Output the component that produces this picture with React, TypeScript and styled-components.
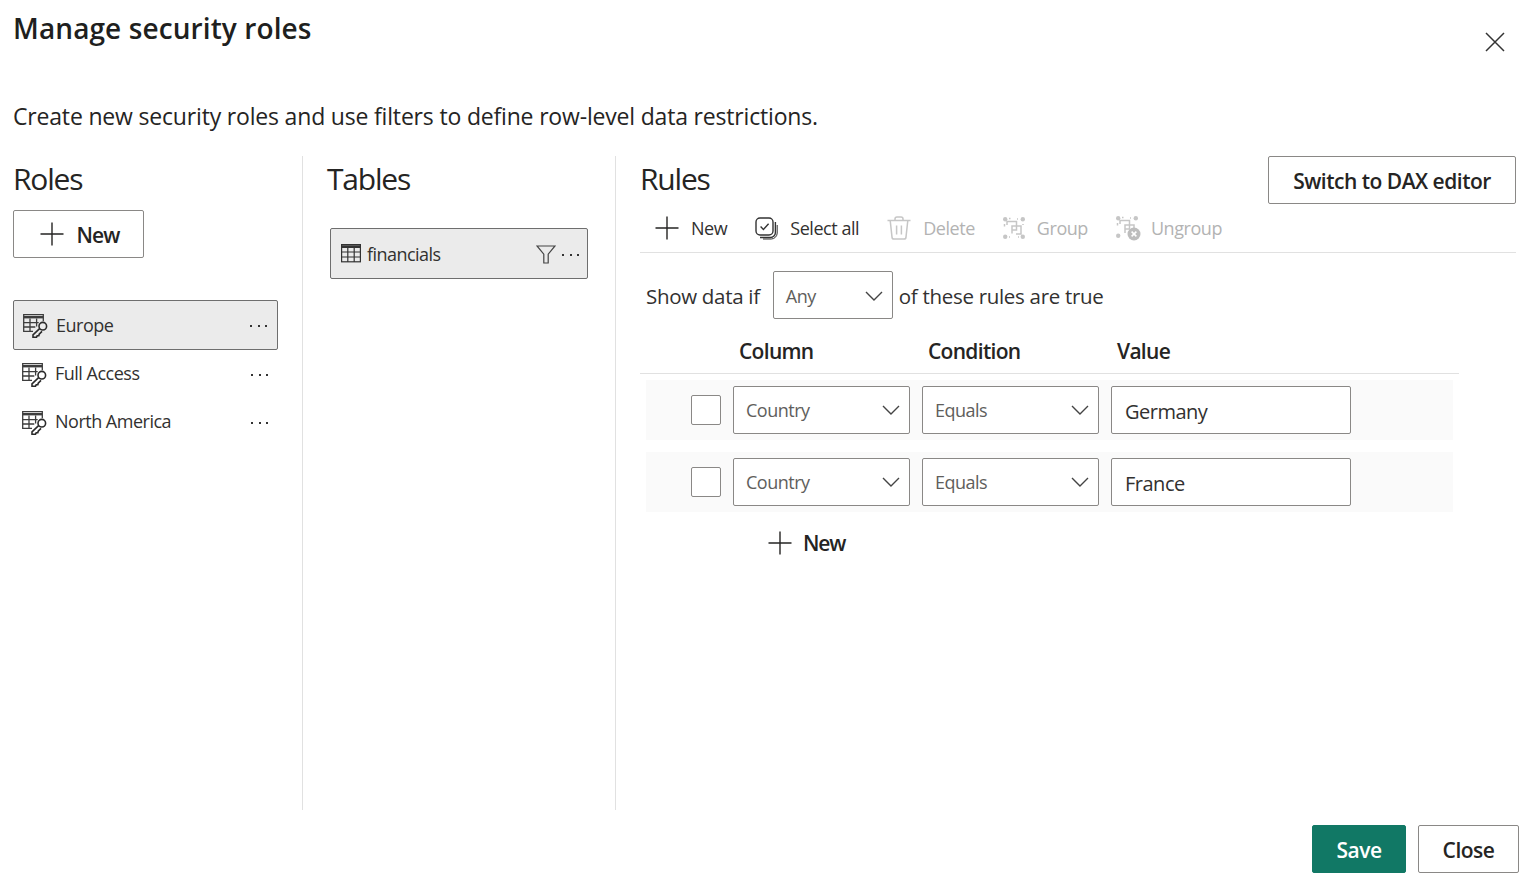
import styled, { createGlobalStyle } from "styled-components";

const GlobalStyle = createGlobalStyle`
    html, body {
        margin: 0;
        padding: 0;
        background: #fff;
    }
    body {
        font-family: "Open Sans", "Noto Sans", "Liberation Sans", sans-serif;
        color: #252423;
    }
    * { box-sizing: border-box; }
`;

const PlusIcon = ({ size = 24 }: { size?: number }) => (
    <svg width={size} height={size} viewBox="0 0 24 24" fill="none" stroke="#252423" strokeWidth="1.4">
        <path d="M12 0.5v23M0.5 12h23" />
    </svg>
);

const Chevron = () => (
    <svg width="18" height="10" viewBox="0 0 18 10" fill="none" stroke="#444" strokeWidth="1.4">
        <path d="M1 1l8 8 8-8" />
    </svg>
);

const RoleSvg = styled.svg`
    margin-top: 2px;
    flex-shrink: 0;
`;

const RoleIcon = () => (
    <RoleSvg width="25" height="24" viewBox="0 0 25 24" fill="none" stroke="#3d3d3d" strokeWidth="1.3">
        <path d="M10 17.4H.7V.7h19.6v6.6" />
        <path d="M.7 3.2h19.6" strokeWidth="2.4" />
        <path d="M.7 8.6h15M.7 13h11.6M7 4.4v13M13.6 4.4v8" />
        <circle cx="19.8" cy="12.2" r="3.8" stroke="#2b2b2b" strokeWidth="1.6" />
        <path d="M16.6 14.6L10 20.8v2.6h3.4l.8-1.6h1.6l.4-1.6 2.8-2.8" stroke="#2b2b2b" strokeWidth="1.6" />
    </RoleSvg>
);

const TableIcon = () => (
    <svg width="20" height="19" viewBox="0 0 20 19" fill="none" stroke="#333" strokeWidth="1.2">
        <rect x="0.6" y="0.6" width="18.8" height="17.2" />
        <path d="M.6 2h18.8M.6 3.2h18.8" strokeWidth="1.4" />
        <path d="M.6 8h18.8M.6 13h18.8M6.8 4v14M13.2 4v14" />
    </svg>
);

const FilterIcon = () => (
    <svg width="20" height="19" viewBox="0 0 20 19" fill="none" stroke="#444" strokeWidth="1.2">
        <path d="M1 1h18l-6.8 8.2V18H7.8V9.2z" />
    </svg>
);

const SelectAllIcon = () => (
    <svg width="23" height="23" viewBox="0 0 23 23" fill="none" stroke="#333" strokeWidth="1.4">
        <rect x="1" y="1" width="17" height="17" rx="4" />
        <path d="M5.6 9.6l2.8 2.8 5.2-5.6" />
        <path d="M20.4 5v10.5a5 5 0 0 1-5 5H5" />
        <path d="M22.2 8v8a6 6 0 0 1-6 6H8" strokeWidth="1" />
    </svg>
);

const TrashIcon = () => (
    <svg width="24" height="24" viewBox="0 0 24 24" fill="none" stroke="#c6c6c6" strokeWidth="1.5">
        <path d="M.5 4.5h23M8 4.5V3a2 2 0 0 1 2-2h4a2 2 0 0 1 2 2v1.5" />
        <path d="M3.2 4.5l1.8 16.6a2 2 0 0 0 2 1.9h10a2 2 0 0 0 2-1.9l1.8-16.6" />
        <path d="M9.6 9.5v9M14.4 9.5v9" />
    </svg>
);

const GroupIcon = () => (
    <svg width="22" height="22" viewBox="0 0 22 22" fill="none" stroke="#c6c6c6" strokeWidth="1.5">
        <g fill="#c6c6c6" stroke="none">
            <circle cx="2.2" cy="2.2" r="2.2" />
            <circle cx="19.8" cy="2.2" r="2.2" />
            <circle cx="2.2" cy="19.8" r="2.2" />
            <circle cx="19.8" cy="19.8" r="2.2" />
        </g>
        <path d="M1.5 7v2.5M6 1.5h1.5M20 7v1M6 20h1M15 20h1M14 2h1" />
        <path d="M4 8V4.5h9.5V13H9" />
        <path d="M9 16.5V9h9v8h-5" />
    </svg>
);

const UngroupSvg = styled.svg`
    margin-right: -2px;
`;

const UngroupIcon = () => (
    <UngroupSvg width="25" height="25" viewBox="0 0 25 25" fill="none" stroke="#c6c6c6" strokeWidth="1.5">
        <g fill="#c6c6c6" stroke="none">
            <circle cx="2.2" cy="2.2" r="2.2" />
            <circle cx="19.8" cy="2.2" r="2.2" />
            <circle cx="2.2" cy="19.8" r="2.2" />
        </g>
        <path d="M1.5 7v2.5M6 1.5h1.5M14 2h1" />
        <path d="M4 8V4.5h9.5V13H9" />
        <path d="M9 17V9h9v3" />
        <circle cx="18" cy="18" r="6.5" fill="#bdbdbd" stroke="none" />
        <path d="M15.6 15.6l4.8 4.8M20.4 15.6l-4.8 4.8" stroke="#fff" strokeWidth="1.5" />
    </UngroupSvg>
);

const CloseIcon = () => (
    <svg width="20" height="20" viewBox="0 0 20 20" fill="none" stroke="#333" strokeWidth="1.5">
        <path d="M1 1l18 18M19 1L1 19" />
    </svg>
);

const Page = styled.div`
    width: 1527px;
    height: 883px;
    overflow: hidden;
    display: flex;
    flex-direction: column;
`;

const Header = styled.header`
    height: 156px;
    padding: 0 13px;
    position: relative;
`;

const Title = styled.h1`
    margin: 0;
    font-size: 28px;
    line-height: 38px;
    padding: 9px 0 0 0;
    font-weight: 600;
    letter-spacing: 0.1px;
    color: #201f1e;
`;

const Subtitle = styled.p`
    margin: 0;
    padding-top: 51px;
    font-size: 23px;
    line-height: 36px;
    letter-spacing: -0.18px;
`;

const CloseButton = styled.div`
    position: absolute;
    top: 32px;
    right: 22px;
    display: flex;
`;

const Columns = styled.main`
    height: 654px;
    display: grid;
    grid-template-columns: 303px 313px 1fr;
`;

const RolesColumn = styled.section`
    border-right: 1px solid #e1e1e1;
    padding: 0 24px 0 13px;
`;

const TablesColumn = styled.section`
    border-right: 1px solid #e1e1e1;
    padding: 0 27px 0 24px;
`;

const RulesColumn = styled.section`
    padding: 0 11px 0 24px;
    min-width: 0;
`;

const ColumnTitle = styled.h2`
    margin: 0;
    font-size: 30px;
    line-height: 46px;
    font-weight: 400;
    letter-spacing: -1.2px;
    color: #252423;
`;

const OutlineButton = styled.button`
    display: flex;
    align-items: center;
    justify-content: center;
    height: 48px;
    background: #fff;
    border: 1px solid #8a8886;
    border-radius: 2px;
    font-family: inherit;
    font-size: 21px;
    font-weight: 600;
    letter-spacing: -0.5px;
    color: #252423;
    padding: 2px 0 0;
`;

const NewRoleButton = styled(OutlineButton)`
    width: 131px;
    margin-top: 8px;
    padding-left: 2px;
    gap: 13px;
    letter-spacing: -0.9px;
    svg { margin-top: -2px; }
`;

const RoleList = styled.div`
    margin-top: 42px;
    display: flex;
    flex-direction: column;
`;

const RoleRow = styled.div<{ $selected?: boolean }>`
    display: flex;
    align-items: center;
    padding: ${({ $selected }) => ($selected ? "0 10px 0 9px" : "0 9px 0 8px")};
    gap: 8px;
    font-size: 18px;
    letter-spacing: -0.5px;
    color: #323130;
    background: ${({ $selected }) => ($selected ? "#ebebeb" : "transparent")};
    border: 1px solid ${({ $selected }) => ($selected ? "#6e6e6e" : "transparent")};
    border-radius: 2px;
    height: ${({ $selected }) => ($selected ? "50px" : "48px")};
`;

const RoleName = styled.span<{ $selected?: boolean }>`
    flex: 1;
    margin-top: ${({ $selected }) => ($selected ? "0" : "-2px")};
`;

const TableName = styled.span`
    flex: 1;
`;

const Dots = styled.span`
    display: flex;
    gap: 5.5px;
    margin-top: 2px;
    i {
        width: 2px;
        height: 2px;
        background: #333;
        display: block;
    }
`;

const MoreDots = () => (
    <Dots>
        <i />
        <i />
        <i />
    </Dots>
);

const TableRow = styled.div`
    margin: 26px 0 0 3px;
    height: 51px;
    width: 258px;
    display: flex;
    align-items: center;
    gap: 6px;
    padding: 0 8px 0 10px;
    background: #ebebeb;
    border: 1px solid #6e6e6e;
    border-radius: 2px;
    font-size: 18px;
    letter-spacing: -0.55px;
    color: #323130;
    svg:nth-of-type(2) { margin-top: 2px; }
`;

const RulesHead = styled.div`
    display: flex;
    justify-content: space-between;
`;

const DaxButton = styled(OutlineButton)`
    width: 248px;
`;

const Toolbar = styled.div`
    height: 49px;
    display: flex;
    align-items: center;
    padding: 0 0 0 15px;
    gap: 28px;
    border-bottom: 1px solid #e1e1e1;
`;

const ToolItem = styled.div<{ $disabled?: boolean }>`
    display: flex;
    align-items: center;
    gap: 12px;
    font-size: 18px;
    letter-spacing: -0.45px;
    color: ${({ $disabled }) => ($disabled ? "#b3b3b3" : "#323130")};
`;

const ShowRow = styled.div`
    margin-top: 18px;
    padding-left: 6px;
    height: 48px;
    display: flex;
    align-items: center;
    font-size: 20.5px;
    letter-spacing: -0.3px;
    color: #323130;
`;

const ShowText = styled.span`
    padding-top: 2px;
`;

const Select = styled.div<{ $width: number }>`
    width: ${({ $width }) => $width}px;
    height: 48px;
    display: flex;
    align-items: center;
    justify-content: space-between;
    padding: 0 9px 0 12px;
    background: #fff;
    border: 1px solid #8a8886;
    border-radius: 2px;
    font-size: 18px;
    letter-spacing: -0.5px;
    color: #605e5c;
`;

const AnySelect = styled(Select)`
    margin: 0 6px 0 13px;
    padding-top: 1px;
`;

const HeaderRow = styled.div`
    width: 819px;
    height: 55px;
    display: grid;
    grid-template-columns: 99px 189px 189px 1fr;
    align-items: center;
    padding-top: 9px;
    border-bottom: 1px solid #e1e1e1;
    font-size: 21px;
    font-weight: 600;
    letter-spacing: -0.7px;
    color: #252423;
    span:first-child { grid-column: 2; }
`;

const RuleRows = styled.div`
    margin: 6px 0 0 6px;
    width: 807px;
    display: flex;
    flex-direction: column;
    gap: 12px;
`;

const RuleRow = styled.div`
    height: 60px;
    display: flex;
    align-items: center;
    gap: 12px;
    padding-left: 45px;
    background: #fafafa;
`;

const Checkbox = styled.div`
    width: 30px;
    height: 30px;
    background: #fff;
    border: 1px solid #8a8886;
    border-radius: 2px;
`;

const ValueInput = styled.div`
    width: 240px;
    height: 48px;
    display: flex;
    align-items: center;
    padding: 2px 13px 0;
    background: #fff;
    border: 1px solid #8a8886;
    border-radius: 2px;
    font-size: 20px;
    letter-spacing: -0.5px;
    color: #323130;
`;

const AddRule = styled.div`
    margin: 13px 0 0 128px;
    display: flex;
    align-items: center;
    gap: 11px;
    height: 36px;
    font-size: 21px;
    font-weight: 600;
    letter-spacing: -1.1px;
`;

const Footer = styled.footer`
    flex: 1;
    display: flex;
    justify-content: flex-end;
    gap: 12px;
    padding: 15px 8px 0 0;
`;

const SaveButton = styled(OutlineButton)`
    width: 94px;
    background: #117865;
    border-color: #117865;
    color: #fff;
`;

const CloseDialogButton = styled(OutlineButton)`
    width: 101px;
`;

const roles = ["Europe", "Full Access", "North America"];
const rules = ["Germany", "France"];

const App = () => {
    return (
        <Page>
            <GlobalStyle />
            <Header>
                <Title>Manage security roles</Title>
                <Subtitle>Create new security roles and use filters to define row-level data restrictions.</Subtitle>
                <CloseButton>
                    <CloseIcon />
                </CloseButton>
            </Header>
            <Columns>
                <RolesColumn>
                    <ColumnTitle>Roles</ColumnTitle>
                    <NewRoleButton>
                        <PlusIcon />
                        New
                    </NewRoleButton>
                    <RoleList>
                        {roles.map((role, index) => (
                            <RoleRow key={role} $selected={index === 0}>
                                <RoleIcon />
                                <RoleName $selected={index === 0}>{role}</RoleName>
                                <MoreDots />
                            </RoleRow>
                        ))}
                    </RoleList>
                </RolesColumn>
                <TablesColumn>
                    <ColumnTitle>Tables</ColumnTitle>
                    <TableRow>
                        <TableIcon />
                        <TableName>financials</TableName>
                        <FilterIcon />
                        <MoreDots />
                    </TableRow>
                </TablesColumn>
                <RulesColumn>
                    <RulesHead>
                        <ColumnTitle>Rules</ColumnTitle>
                        <DaxButton>Switch to DAX editor</DaxButton>
                    </RulesHead>
                    <Toolbar>
                        <ToolItem>
                            <PlusIcon />
                            New
                        </ToolItem>
                        <ToolItem>
                            <SelectAllIcon />
                            Select all
                        </ToolItem>
                        <ToolItem $disabled>
                            <TrashIcon />
                            Delete
                        </ToolItem>
                        <ToolItem $disabled>
                            <GroupIcon />
                            Group
                        </ToolItem>
                        <ToolItem $disabled>
                            <UngroupIcon />
                            Ungroup
                        </ToolItem>
                    </Toolbar>
                    <ShowRow>
                        <ShowText>Show data if</ShowText>
                        <AnySelect $width={120}>
                            Any
                            <Chevron />
                        </AnySelect>
                        <ShowText>of these rules are true</ShowText>
                    </ShowRow>
                    <HeaderRow>
                        <span>Column</span>
                        <span>Condition</span>
                        <span>Value</span>
                    </HeaderRow>
                    <RuleRows>
                        {rules.map((value) => (
                            <RuleRow key={value}>
                                <Checkbox />
                                <Select $width={177}>
                                    Country
                                    <Chevron />
                                </Select>
                                <Select $width={177}>
                                    Equals
                                    <Chevron />
                                </Select>
                                <ValueInput>{value}</ValueInput>
                            </RuleRow>
                        ))}
                    </RuleRows>
                    <AddRule>
                        <PlusIcon />
                        New
                    </AddRule>
                </RulesColumn>
            </Columns>
            <Footer>
                <SaveButton>Save</SaveButton>
                <CloseDialogButton>Close</CloseDialogButton>
            </Footer>
        </Page>
    );
};

export default App;
